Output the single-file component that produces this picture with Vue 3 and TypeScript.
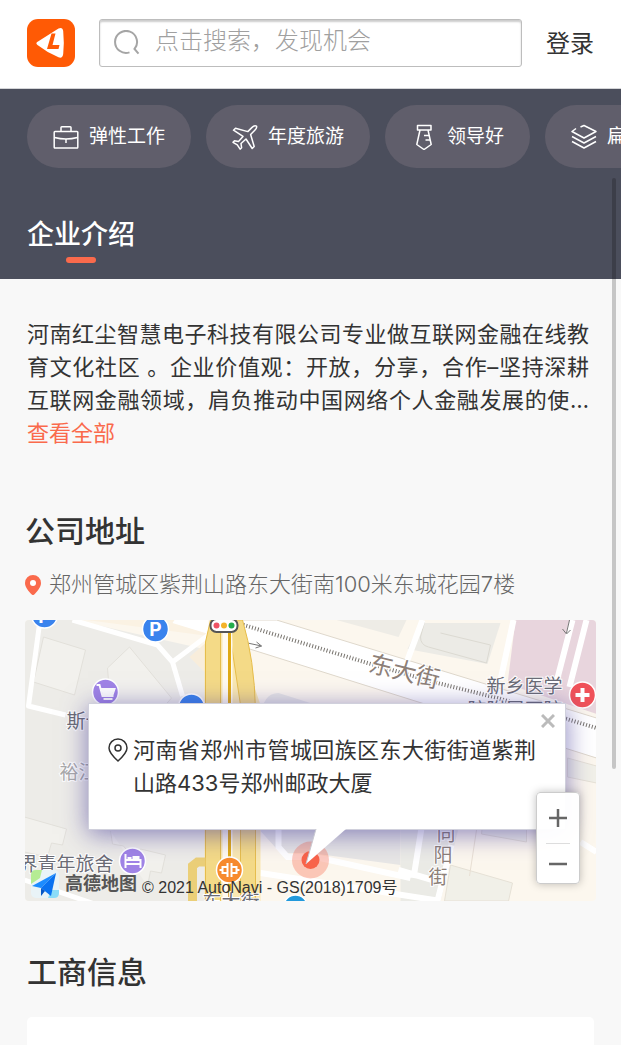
<script setup lang="ts">
import { ref } from 'vue'

interface Tag {
  label: string
  paths: string[]
}

const keyword = ref('')

const tags: Tag[] = [
  {
    label: '弹性工作',
    paths: [
      'M2 7.5h22a.8.8 0 0 1 .8.8v15a.8.8 0 0 1-.8.8H2a.8.8 0 0 1-.8-.8v-15A.8.8 0 0 1 2 7.500z',
      'M8 7.500V3.500a.8.8 0 0 1 .8-.8h8.400a.8.8 0 0 1 .8.8v4',
      'M1.500 13.500q11.500 3 23 0M13 15v4'
    ]
  },
  {
    label: '年度旅游',
    paths: [
      'M24.500 2.200c-1.500-.8-3.500.2-4.700 1.400l-4 4L3.500 4.200 1.500 6.200l9.500 6.200-4.500 5-4-.7-1.500 1.600 4.300 2.600 2.800 4.300 1.500-1.500-.6-4.200 5-4.500 6.200 9.500 2-2-3.600-12 4.200-4.300c1.200-1.200 2.300-2.800 1.700-4z'
    ]
  },
  {
    label: '领导好',
    paths: [
      'M6.500 1.500h13.500v4.500H6.500z',
      'M9 6 5.800 20.500l7.200 5 7.200-5L17 6',
      'M13 11.500h5M14.500 16h4.500'
    ]
  },
  {
    label: '扁平管理',
    paths: [
      'M5 4.500 1 7.500l12 6.500 12-6.500L13 1.500 9.500 3',
      'M1 12.500l12 6.500 12-6.500',
      'M1 17.500l12 6.500 12-6.500'
    ]
  }
]
</script>

<template>
  <div class="page">
    <header class="topbar">
      <a class="logo" href="#" aria-label="首页">
        <svg viewBox="0 0 48 48" width="48" height="48" aria-hidden="true">
          <rect width="48" height="48" rx="11" fill="#ff5a05" />
          <path d="M11 22.500 31.500 9.500Q35.500 7.500 36.200 12q1.200 11.500 0 23-.8 5-4.700 3.300Q20 33.500 10.500 26q-2.500-2 .5-3.500z" fill="#fff" />
          <path d="M24.500 14.500h4L25.500 26h7l-1 4H20z" fill="#ff5a05" />
        </svg>
      </a>
      <label class="search">
        <svg viewBox="0 0 26 26" width="26" height="26" aria-hidden="true">
          <path d="M15.500 22.400A11 11 0 1 1 20.500 19l4 4.700" />
        </svg>
        <input v-model="keyword" type="search" placeholder="点击搜索，发现机会" aria-label="搜索" />
      </label>
      <a class="login" href="#">登录</a>
    </header>

    <section class="hero">
      <ul class="tags">
        <li v-for="tag in tags" :key="tag.label" class="tag">
          <svg viewBox="0 0 26 26" width="26" height="26" aria-hidden="true">
            <path v-for="d in tag.paths" :key="d" :d="d" />
          </svg>
          <span>{{ tag.label }}</span>
        </li>
      </ul>
      <h2 class="hero-title">企业介绍</h2>
    </section>

    <main class="content">
      <section class="intro">
        <p>河南红尘智慧电子科技有限公司专业做互联网金融在线教育文化社区 。企业价值观：开放，分享，合作–坚持深耕互联网金融领域，肩负推动中国网络个人金融发展的使…</p>
        <a href="#">查看全部</a>
      </section>

      <section class="address">
        <h2>公司地址</h2>
        <p>
          <svg viewBox="0 0 16 20" width="16" height="20" aria-hidden="true">
            <path d="M8 0a8 8 0 0 1 8 8c0 4.500-4 8.500-6.500 11.200a2 2 0 0 1-3 0C4 16.500 0 12.500 0 8a8 8 0 0 1 8-8z" fill="#fa6a4c" />
            <circle cx="8" cy="8" r="3" fill="#fff" />
          </svg>
          <span>郑州管城区紫荆山路东大街南100米东城花园7楼</span>
        </p>

        <div class="map">
          <svg class="tiles" viewBox="0 0 572 281" preserveAspectRatio="xMidYMid slice" role="img" aria-label="地图">
            <rect width="572" height="281" fill="#fcf7ee" />
            <path d="M0 0h50l134 30v251H0z" fill="#edece8" />
            <path d="M62 0h122v16z" fill="#fbf2e3" />
            <path d="M165 37l16-14v30z" fill="#f8eddb" />
            <g fill="#f2f1ed" stroke="#e2e0da">
              <path d="M19 17l42 13-11 45-41-13zM105 27 83 48l3 38h54l7-8zM0 197l42 12-4 16-11-2-4 14-23-5zM86 211l2 13 11 2 14 18 3-15 25 6-4 18-11-2-3 15" />
            </g>
            <g fill="none" stroke="#fff" stroke-width="5" stroke-linejoin="round">
              <path d="M15 4 4 86l37 9M48 0l85 25 15 17 10 34M148 42l36-27M0 260l70 24" />
            </g>
            <path d="M150 0h34v14L148 3z" fill="#fff" />

            <path d="M396 3h80l-13 41-80-15z" fill="#ecebe6" />
            <path d="M400 2l-4 15q0 8 8 10l58 16 4-18-50-12" fill="none" stroke="#dcdad2" />
            <path d="M312 0h70l-8 17z" fill="#eeece6" />
            <path d="M491 0h81v94l-89-30z" fill="#e8d5dd" />
            <path d="M214 0h38l320 98v40L222 28z" fill="#fff" stroke="#dfd8cc" />
            <path d="M236 98q2-25 18-25l70 22zM236 180h140v65l-90-12h-30l-20-22z" fill="#e7e6e5" />
            <path d="M376 200h60l-20 81h-40v-21z" fill="#ebebe6" />
            <path d="M426 245l62 18-4 18h-64zM458 205h44v17l-45-8zM543 138l29 8v17l-29-6z" fill="#f1f0e8" stroke="#e6e1d6" />
            <path d="M452 210l-7 46" stroke="#e9e0d4" />
            <g fill="none" stroke="#fff" stroke-width="6">
              <path d="M398 0l-15 40M489 0l-13 60M548 0l-16 62M562 0l-17 67M397 208l-8 50M374 250l34 10M427 225l-14 56M556 222l16 10M254 208v19l9 10h28l95 21M236 253l180 28" />
            </g>
            <path d="M216 4l127 39 70 20 60 15 99 30" fill="none" stroke="#77736d" stroke-width="4" stroke-dasharray="1 2" />
            <path d="M223 23l14 3M232 22l5 4-6 2M545 0l-3 13M538 9l4 5 4-4" fill="none" stroke="#777" />

            <path d="M186 0h28v20l22 65v196h-56V25z" fill="#f9e8b2" />
            <path d="M186 0h10v281h-15V22zM209 0h9q12 40 13 90v191h-15V85l-9-60z" fill="#f4da87" stroke="#e6bd4c" />
            <path d="M198 0h10v281h-10z" fill="#fffaf0" />
            <path d="M205 12v269" stroke="#dfaa15" stroke-width="3" />
            <path d="M168 281v-35l5-4h8" fill="none" stroke="#ebcf78" stroke-width="9" />

            <g class="road-name" font-size="24">
              <text transform="translate(343 51) rotate(14)">东大街</text>
            </g>
            <g class="road-name" font-size="19">
              <text x="412" y="221">向</text>
              <text x="409" y="242">阳</text>
              <text x="404" y="264">街</text>
            </g>
            <g class="place-name" font-size="19">
              <text x="42" y="108">斯卡</text>
              <text x="35" y="159" fill="#aaa">裕江</text>
              <text x="-6" y="251">界青年旅舍</text>
              <text x="462" y="73">新乡医学</text>
              <text x="443" y="97">院附属医院</text>
              <text x="178" y="289">东大街</text>
            </g>

            <rect x="186" y="-1" width="27" height="13" rx="6" fill="#fff" stroke="#555" stroke-width="2" />
            <circle cx="192" cy="5.500" r="3" fill="#ef5363" />
            <circle cx="199.500" cy="5.500" r="3" fill="#f4b32a" />
            <circle cx="207" cy="5.500" r="3" fill="#24ad4c" />

            <g stroke="#fff" stroke-width="1.500">
              <circle cx="20" cy="-5" r="13" fill="#3a83ed" />
              <circle cx="131" cy="9" r="13" fill="#3a83ed" />
              <circle cx="167" cy="87" r="13" fill="#3a83ed" />
              <circle cx="81" cy="72" r="13" fill="#a084e6" />
              <circle cx="108" cy="241" r="13" fill="#a084e6" />
              <circle cx="558" cy="75" r="13" fill="#f0525a" />
              <circle cx="205" cy="250" r="13" fill="#f78b2d" />
              <circle cx="271" cy="287" r="12" fill="#2199dc" />
            </g>
            <text x="131" y="16" class="parking">P</text>
            <text x="20" y="3" class="parking">P</text>
            <path d="M558 68v14M551 75h14" stroke="#fff" stroke-width="4" />
            <path d="M72 65h3l3 11h11M76 69h14l-2 6H77M79 79h9" fill="none" stroke="#fff" stroke-width="2" />
            <path d="M77 69h12l-1 6H78z" fill="#fff" />
            <path d="M101 234v14M101 244h15v4M102 240h14v4" fill="none" stroke="#fff" stroke-width="2" />
            <path d="M103 237h4v3h-4zM108 236h7v5h-7z" fill="#fff" />
            <path d="M203 243v14M207 243v14M203 247h-5v6h5M207 247h5v6h-5M195 250h4M211 250h4" fill="none" stroke="#fff" stroke-width="2" />

            <circle cx="286" cy="240" r="18.500" fill="#fa6a4c" opacity=".35" />
            <circle cx="286" cy="240" r="9" fill="#f9644a" />
          </svg>

          <div class="popup">
            <button class="close" type="button" aria-label="关闭">
              <svg viewBox="0 0 14 14" width="14" height="14" aria-hidden="true">
                <path d="M1 1l12 12M13 1 1 13" stroke="#bbb" stroke-width="3" />
              </svg>
            </button>
            <svg class="pin" viewBox="0 0 20 24" width="20" height="24" aria-hidden="true">
              <path d="M10 1a9 9 0 0 1 9 9c0 4.500-4 8.500-9 13-5-4.500-9-8.500-9-13a9 9 0 0 1 9-9z" />
              <circle cx="10" cy="10" r="3" />
            </svg>
            <p>河南省郑州市管城回族区东大街街道紫荆山路433号郑州邮政大厦</p>
            <svg class="tail" viewBox="0 0 42 36" width="42" height="36" aria-hidden="true">
              <path d="M11 0h30L1 35z" fill="#fff" />
              <path d="M11 0 1 35" stroke="#c8c8d0" />
            </svg>
          </div>

          <div class="credit">
            <svg viewBox="0 0 30 30" width="30" height="30" aria-hidden="true">
              <rect x="1" y="1" width="28" height="28" rx="5" fill="#e9f3f7" />
              <path d="M1 15V6q0-5 5-5h6L10 9z" fill="#b5ec93" />
              <path d="M18 29l3-8h8v3q0 5-5 5z" fill="#8bdcf8" />
              <path d="M26 4 2 17l9 2z" fill="#1c8cff" />
              <path d="M26 4 11 19l10 8z" fill="#0a72f0" />
              <path d="M11 19v8l4-5z" fill="#0757c5" />
            </svg>
            <b>高德地图</b>
            <span>© 2021 AutoNavi - GS(2018)1709号</span>
          </div>

          <div class="zoom">
            <button type="button" aria-label="放大">
              <svg viewBox="0 0 20 20" width="20" height="20" aria-hidden="true"><path d="M10 1v18M1 10h18" /></svg>
            </button>
            <button type="button" aria-label="缩小">
              <svg viewBox="0 0 20 20" width="20" height="20" aria-hidden="true"><path d="M1 10h18" /></svg>
            </button>
          </div>
        </div>
      </section>

      <section class="business">
        <h2>工商信息</h2>
        <div class="card"></div>
      </section>
    </main>

    <div class="scroll-thumb" aria-hidden="true"></div>
  </div>
</template>

<style>
html,
body {
  margin: 0;
  background: #f8f8f8;
}
</style>

<style scoped>
.page {
  position: relative;
  overflow: hidden;
  color: #333;
  font-family: Inter, "Noto Sans CJK SC", sans-serif;
  font-size: 22px;
  line-height: 33px;
}

h2,
p,
ul {
  margin: 0;
  padding: 0;
}

a {
  color: inherit;
  text-decoration: none;
}

button {
  padding: 0;
  border: 0;
  background: none;
}

svg {
  display: block;
  flex: none;
}

.topbar {
  display: flex;
  align-items: center;
  gap: 24px;
  padding: 19px 27px 21px;
  background: #fff;
  border-bottom: 1px solid #d4d5d8;
}

.search {
  display: flex;
  flex: 1;
  align-items: center;
  gap: 15px;
  min-width: 0;
  box-sizing: border-box;
  height: 48px;
  padding: 0 14px;
  border: 1px solid #bdbdbd;
  border-radius: 3px;
  box-shadow: inset 0 2px 2px #ccc;
}

.search path {
  fill: none;
  stroke: #a5a5a5;
  stroke-width: 2;
}

.search input {
  flex: 1;
  min-width: 0;
  height: 36px;
  padding: 0 0 6px;
  border: 0;
  outline: 0;
  background: transparent;
  color: #333;
  font: inherit;
  font-size: 24px;
}

.search input::placeholder {
  color: #a0a0a0;
  opacity: 1;
  font-weight: 300;
}

.login {
  font-size: 24px;
}

.hero {
  padding: 16px 0 16px 27px;
  background: #4b4e5c;
  color: #fff;
}

.tags {
  display: flex;
  gap: 15px;
  overflow: hidden;
  list-style: none;
}

.tag {
  display: flex;
  flex: none;
  align-items: center;
  gap: 10px;
  height: 63px;
  padding: 0 26px;
  border-radius: 32px;
  background: #605e6b;
  font-size: 19px;
}

.tag path {
  fill: none;
  stroke: #fff;
  stroke-width: 1.5;
  stroke-linejoin: round;
}

.hero-title {
  display: flex;
  flex-direction: column;
  align-items: center;
  gap: 5px;
  width: max-content;
  margin-top: 50px;
  font-size: 27px;
  font-weight: 500;
  line-height: 34px;
}

.hero-title::after {
  content: "";
  width: 30px;
  height: 6px;
  border-radius: 3px;
  background: #fa6a4c;
}

.content {
  padding: 39px 25px 0;
}

.intro {
  padding: 0 7px 0 2px;
}

.intro p {
  text-align: justify;
  text-align-last: justify;
}

.intro a {
  color: #fa6a4c;
}

.address h2,
.business h2 {
  font-size: 30px;
  font-weight: 500;
  line-height: 40px;
}

.address {
  padding-top: 61px;
}

.address > p {
  display: flex;
  align-items: center;
  gap: 8px;
  margin-top: 17px;
  color: #666;
  font-weight: 300;
}

.map {
  position: relative;
  height: 281px;
  margin-top: 19px;
  overflow: hidden;
  border-radius: 4px;
}

.tiles {
  width: 100%;
  height: 100%;
}

.road-name {
  fill: #8d8078;
  stroke: #fff;
  stroke-width: 2;
  paint-order: stroke;
}

.place-name {
  fill: #6b6c75;
  stroke: #fff;
  stroke-width: 2;
  paint-order: stroke;
}

.parking {
  fill: #fff;
  font-size: 19px;
  font-weight: 700;
  text-anchor: middle;
}

.popup {
  position: absolute;
  top: 83px;
  right: 30px;
  left: 63px;
  display: flex;
  align-items: flex-start;
  gap: 5px;
  box-sizing: border-box;
  height: 127px;
  padding: 30px 29px 0 19px;
  border: 1px solid #d0d0dc;
  background: #fff;
  box-shadow: 0 4px 24px rgba(62, 52, 150, 0.6);
}

.popup p {
  flex: 1;
  text-align: justify;
}

.pin {
  margin-top: 4px;
  fill: none;
  stroke: #333;
  stroke-width: 1.5;
}

.close {
  position: absolute;
  top: 10px;
  right: 10px;
}

.tail {
  position: absolute;
  top: 125px;
  left: 216px;
}

.credit {
  position: absolute;
  bottom: 1px;
  left: 5px;
  display: flex;
  align-items: center;
  gap: 5px;
  color: #333;
  font-family: "Liberation Sans", "Noto Sans CJK SC", sans-serif;
  font-size: 16px;
  line-height: 24px;
}

.credit b {
  color: #555;
  font-size: 18px;
}

.credit span {
  padding-top: 8px;
}

.zoom {
  position: absolute;
  right: 16px;
  bottom: 17px;
  display: flex;
  flex-direction: column;
  box-sizing: border-box;
  width: 44px;
  height: 92px;
  padding: 0 9px;
  border: 1px solid #ccc;
  border-radius: 4px;
  background: rgba(255, 255, 255, 0.96);
  box-shadow: 0 0 8px rgba(0, 0, 0, 0.25);
}

.zoom button {
  display: flex;
  flex: 1;
  align-items: center;
  justify-content: center;
}

.zoom button + button {
  flex: 0 0 40px;
  border-top: 1px solid #ddd;
}

.zoom path {
  stroke: #666;
  stroke-width: 2.5;
}

.business {
  padding: 51px 2px 0;
}

.card {
  height: 28px;
  margin-top: 25px;
  border-radius: 5px 5px 0 0;
  background: #fff;
}

.scroll-thumb {
  position: absolute;
  top: 178px;
  right: 5px;
  width: 4px;
  height: 591px;
  border-radius: 2px;
  background: rgba(0, 0, 0, 0.2);
}
</style>
